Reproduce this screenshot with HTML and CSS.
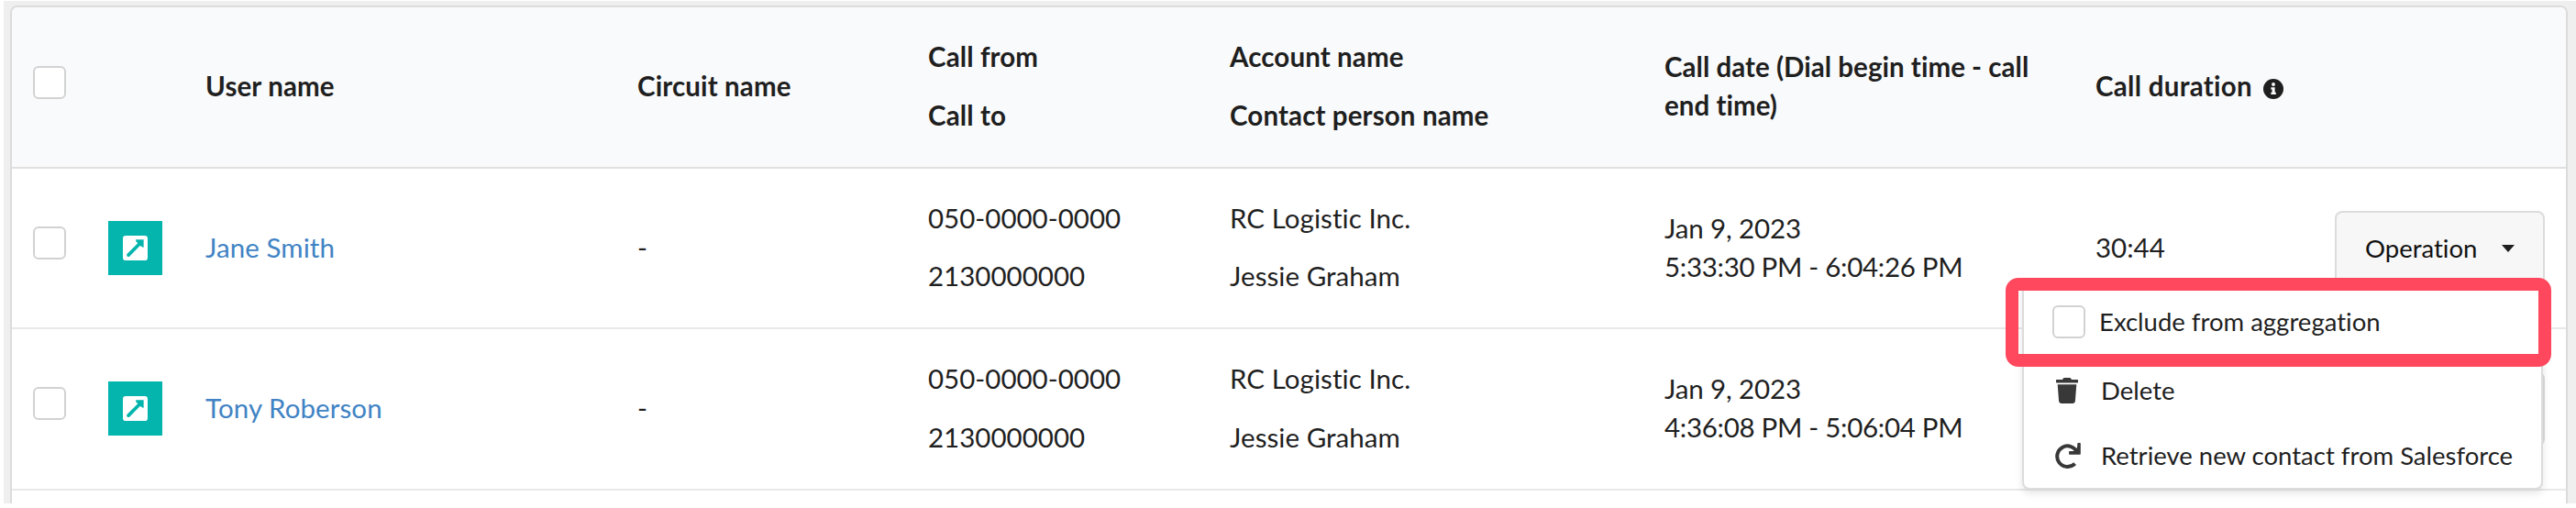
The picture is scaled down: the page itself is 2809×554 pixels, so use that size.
FILE: index.html
```
<!DOCTYPE html>
<html lang="en">
<head>
<meta charset="utf-8">
<title>Call history</title>
<link rel="stylesheet" href="styles.css">
</head>
<body>
<main class="page">
  <section class="table">
    <div class="row head">
      <div class="cell check"><span class="checkbox"></span></div>
      <div class="cell"></div>
      <div class="cell">User name</div>
      <div class="cell">Circuit name</div>
      <div class="cell pair"><span>Call from</span><span>Call to</span></div>
      <div class="cell pair"><span>Account name</span><span>Contact person name</span></div>
      <div class="cell date">Call date (Dial begin time - call<br>end time)</div>
      <div class="cell inline">Call duration
        <svg class="info" viewBox="0 0 22 22"><circle cx="11" cy="11" r="11" fill="#1f1f1f"/><circle cx="11" cy="6" r="1.9" fill="#fff"/><path d="M8.400 9.200h4.200v5.600h1.200v2.200H8.400v-2.200h1.200v-3.400H8.400z" fill="#fff"/></svg>
      </div>
      <div class="cell"></div>
    </div>
    <div class="row">
      <div class="cell check"><span class="checkbox"></span></div>
      <div class="cell icon"><span class="tile"><svg viewBox="0 0 26 26"><rect width="26" height="26" rx="3" fill="#fff"/><path d="M5.8 20.3 18.6 7.5" stroke="#03b5ad" stroke-width="3.6" stroke-linecap="round"/><path d="M13.4 4.2h8.4v8.4l-2.6-1.2-5.2-5.2z" fill="#03b5ad"/></svg></span></div>
      <div class="cell"><a class="link">Jane Smith</a></div>
      <div class="cell">-</div>
      <div class="cell pair"><span>050-0000-0000</span><span>2130000000</span></div>
      <div class="cell pair person"><span>RC Logistic Inc.</span><span>Jessie Graham</span></div>
      <div class="cell"><span class="day">Jan 9, 2023</span><span class="time">5:33:30 PM - 6:04:26 PM</span></div>
      <div class="cell">30:44</div>
      <div class="cell op">
        <div class="button">Operation<i class="caret"></i></div>
        <div class="menu">
          <div class="item first"><span class="checkbox"></span><span>Exclude from aggregation</span></div>
          <div class="item"><svg class="trash" viewBox="0 0 24 28"><path d="M.6 2H7L8.2.3Q8.400 0 8.800 0h6.400q.4 0 .6.300L17 2h6.400q.6 0 .6.600v2.200q0 .6-.6.600H.6Q0 5.400 0 4.800V2.600Q0 2 .6 2zM1.700 7.200h20.600L20.900 25.600Q20.700 28 18.300 28H5.700Q3.300 28 3.100 25.600z" fill="#383838"/></svg><span>Delete</span></div>
          <div class="item"><svg class="redo" viewBox="0 0 28 28"><path d="M24 10.500A11.300 11.300 0 1 0 21.600 22.600" fill="none" stroke="#383838" stroke-width="4"/><path d="M24.500 0H27.200q.6 0 .6.600V12q0 .7-.7.700H15.700q-.6 0-.6-.6V9.500q0-.6.6-.6h4.900L24 5z" fill="#383838"/></svg><span>Retrieve new contact from Salesforce</span></div>
        </div>
        <div class="highlight"></div>
      </div>
    </div>
    <div class="row">
      <div class="cell check"><span class="checkbox"></span></div>
      <div class="cell icon"><span class="tile"><svg viewBox="0 0 26 26"><rect width="26" height="26" rx="3" fill="#fff"/><path d="M5.8 20.3 18.6 7.5" stroke="#03b5ad" stroke-width="3.6" stroke-linecap="round"/><path d="M13.4 4.2h8.4v8.4l-2.6-1.2-5.2-5.2z" fill="#03b5ad"/></svg></span></div>
      <div class="cell"><a class="link">Tony Roberson</a></div>
      <div class="cell">-</div>
      <div class="cell pair"><span>050-0000-0000</span><span>2130000000</span></div>
      <div class="cell pair person"><span>RC Logistic Inc.</span><span>Jessie Graham</span></div>
      <div class="cell"><span class="day">Jan 9, 2023</span><span class="time">4:36:08 PM - 5:06:04 PM</span></div>
      <div class="cell"></div>
      <div class="cell op"><div class="button blank"></div></div>
    </div>
  </section>
</main>
</body>
</html>
```

FILE: styles.css
```
* { box-sizing: border-box; }
body {
  margin: 0;
  height: 554px;
  overflow: hidden;
  background: #fff;
  font-family: Lato, "Liberation Sans", sans-serif;
  font-size: 29.5px;
  font-variant-ligatures: none;
  line-height: 42px;
  color: #1f1f1f;
}
.page {
  display: flow-root;
  height: 549px;
  margin: 0 0 0 4px;
  padding: 6px 9px 0 7px;
  border-top: 1px solid #fff;
  background: #efefef;
}
.table {
  height: 543px;
  margin-top: -1px;
  border: 2px solid #dcdcdc;
  border-bottom: 0;
  border-radius: 8px 8px 0 0;
  background: #fff;
}
.row {
  display: grid;
  grid-template-columns: 105px 106px 471px 317px 329px 474px 470px 250px 1fr;
  height: 175.3px;
  border-bottom: 2px solid #e8e8e8;
}
.head {
  height: 176px;
  background: #f9fafb;
  border-radius: 6px 6px 0 0;
  border-bottom-color: #e0e0e0;
  font-weight: 700;
  letter-spacing: .12px;
}
.cell {
  display: flex;
  flex-direction: column;
  justify-content: center;
  align-items: flex-start;
  padding-bottom: 2px;
  white-space: nowrap;
}
.icon { padding-bottom: 0; }
.date { letter-spacing: .03px; }
.inline {
  flex-direction: row;
  justify-content: flex-start;
  align-items: center;
  gap: 12px;
  letter-spacing: .28px;
}
.info { width: 22px; height: 22px; margin-top: 6px; }
.pair { gap: 21.500px; }
.person { letter-spacing: .06px; }
.check { padding: 0 0 11px 23px; }
.checkbox {
  flex: none;
  width: 36px;
  height: 36px;
  border: 2px solid #d2d2d2;
  border-radius: 6px;
  background: #fff;
}
.tile {
  display: flex;
  justify-content: center;
  align-items: center;
  width: 59px;
  height: 59px;
  background: #03b5ad;
}
.tile svg { width: 27px; height: 27px; }
.link {
  color: #4183c4;
  letter-spacing: .08px;
}
.day { letter-spacing: -.12px; }
.time { letter-spacing: -.29px; }
.op { position: relative; padding: 0 0 0 11px; }
.button {
  display: flex;
  justify-content: space-between;
  align-items: center;
  width: 229px;
  height: 82px;
  padding: 0 31px;
  border: 2px solid #dcdcdc;
  border-radius: 8px;
  background: #f7f7f7;
  color: #111;
  font-size: 27.5px;
}
.blank { background: #fff; }
.caret {
  border: 7.500px solid transparent;
  border-top: 8px solid #1f1f1f;
  border-bottom: 0;
}
.menu {
  position: absolute;
  z-index: 1;
  right: 25px;
  top: 125px;
  width: 568px;
  height: 225px;
  border: 2px solid #dcdcdc;
  border-radius: 0 0 8px 8px;
  background: #fff;
  box-shadow: 0 4px 8px rgba(0, 0, 0, .1);
  font-size: 27.5px;
}
.item {
  display: grid;
  grid-template-columns: 53px 1fr;
  align-items: center;
  height: 70.7px;
  padding-left: 31px;
}
.first {
  grid-template-columns: 51px 1fr;
  height: 80px;
}
.trash { width: 24px; height: 28px; margin-left: 4px; }
.redo { width: 28px; height: 28px; margin-left: 3px; }
.highlight {
  position: absolute;
  z-index: 2;
  right: 16px;
  top: 119px;
  width: 595px;
  height: 97px;
  border: 14px solid #ff475d;
  border-radius: 14px;
}
```
